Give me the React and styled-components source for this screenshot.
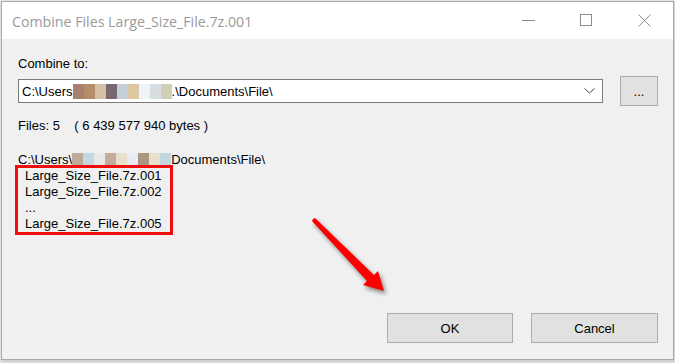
import React from "react";
import styled, {createGlobalStyle} from "styled-components";

const GlobalStyle = createGlobalStyle`
  html, body {
    margin: 0;
    padding: 0;
    background: #e6e6e6;
  }
  body {
    width: 675px;
    height: 363px;
    overflow: hidden;
  }
`;

const Window = styled.div`
  position: relative;
  margin: 1px 0 0 1px;
  width: 673px;
  height: 359px;
  box-sizing: border-box;
  border: 1px solid #a9a9a9;
  background: #f0f0f0;
  display: flex;
  flex-direction: column;
  box-shadow: 1px 2px 3px rgba(0, 0, 0, 0.12);
  font-family: "Liberation Sans", Arial, sans-serif;
  font-size: 13px;
  color: #000;
`;

const TitleBar = styled.div`
  height: 37px;
  background: #fff;
  display: flex;
  align-items: center;
`;

const Title = styled.div`
  flex: 1;
  padding-left: 10px;
  padding-top: 1px;
  font-family: "Open Sans", "Noto Sans", sans-serif;
  font-size: 14.2px;
  color: #9a9a9a;
  white-space: nowrap;
`;

const TitleButton = styled.div`
  width: 58px;
  height: 37px;
  display: flex;
  align-items: center;
  justify-content: center;

  svg {
    display: block;
  }
`;

const Body = styled.div`
  flex: 1;
  display: flex;
  flex-direction: column;
  padding: 17px 15px 16px 16px;
`;

const Label = styled.div`
  line-height: 15px;
  margin-bottom: 5px;
`;

const PathRow = styled.div`
  display: flex;
  align-items: center;
  gap: 17px;
`;

const Combo = styled.div`
  width: 585px;
  height: 24px;
  box-sizing: border-box;
  border: 1px solid #7a7a7a;
  background: #fff;
  display: flex;
  align-items: center;
  padding: 0 7px 0 3px;
  white-space: nowrap;
`;

const ComboText = styled.div`
  flex: 1;
  display: flex;
  align-items: center;
`;

const Blur = styled.span`
  display: inline-block;
  width: ${(p) => p.$w || 11}px;
  height: ${(p) => p.$h || 15}px;
  background: ${(p) => p.$c};
`;

const Button = styled.div`
  width: ${(p) => p.$w}px;
  height: 30px;
  box-sizing: border-box;
  border: 1px solid #adadad;
  background: #e1e1e1;
  display: flex;
  align-items: center;
  justify-content: center;
`;

const Info = styled.div`
  margin-top: 12px;
  line-height: 15px;
  white-space: pre;
`;

const Folder = styled.div`
  margin-top: 19px;
  line-height: 15px;
  display: flex;
  align-items: center;
  white-space: nowrap;
`;

const Highlight = styled.div`
  margin: -2px 0 0 -3px;
  width: 158px;
  box-sizing: border-box;
  border: 3px solid #f00d0d;
  padding: 0 0 0 7px;
`;

const FileLine = styled.div`
  line-height: 16px;
  height: 16px;
`;

const Footer = styled.div`
  margin-top: auto;
  display: flex;
  justify-content: flex-end;
  gap: 18px;
`;

const Arrow = styled.svg`
  position: absolute;
  left: 299px;
  top: 205px;
  overflow: visible;
  filter: drop-shadow(2px 3px 2px rgba(0, 0, 0, 0.45));
`;

const comboBlur = ["#a97f6f", "#b68d6a", "#d6c0a5", "#76696f", "#c3d0d8", "#dec8a3", "#eef4fa", "#d8dde0", "#d0d0b8"];
const folderBlur = ["#c0aa9a", "#c4d9e0", "#e8ebea", "#c4ac9a", "#e6e0cc", "#e6ecef", "#ab9680", "#e6e0cc", "#c4d6e2"];

const files = ["Large_Size_File.7z.001", "Large_Size_File.7z.002", "...", "Large_Size_File.7z.005"];

const App = () => {
  return (
    <>
      <GlobalStyle />
      <Window>
        <TitleBar>
          <Title>Combine Files Large_Size_File.7z.001</Title>
          <TitleButton>
            <svg width="13" height="13" viewBox="0 0 13 13">
              <line x1="0" y1="6.5" x2="13" y2="6.5" stroke="#8c8c8c" strokeWidth="1" />
            </svg>
          </TitleButton>
          <TitleButton>
            <svg width="13" height="13" viewBox="0 0 13 13">
              <rect x="0.5" y="0.5" width="11" height="11" fill="none" stroke="#8c8c8c" strokeWidth="1" />
            </svg>
          </TitleButton>
          <TitleButton>
            <svg width="13" height="13" viewBox="0 0 13 13">
              <path d="M0.5 0.5 L12.5 12.5 M12.5 0.5 L0.5 12.5" stroke="#8c8c8c" strokeWidth="1" />
            </svg>
          </TitleButton>
        </TitleBar>
        <Body>
          <Label>Combine to:</Label>
          <PathRow>
            <Combo>
              <ComboText>
                C:\Users
                {comboBlur.map((c, i) => (
                  <Blur key={i} $c={c} />
                ))}
                .\Documents\File\
              </ComboText>
              <svg width="11" height="6" viewBox="0 0 11 6">
                <path d="M0.5 0.5 L5.5 5 L10.5 0.5" fill="none" stroke="#444" strokeWidth="1" />
              </svg>
            </Combo>
            <Button $w={38}>...</Button>
          </PathRow>
          <Info>{"Files: 5    ( 6 439 577 940 bytes )"}</Info>
          <Folder>
            C:\Users\
            {folderBlur.map((c, i) => (
              <Blur key={i} $c={c} $h={14} />
            ))}
            Documents\File\
          </Folder>
          <Highlight>
            {files.map((f) => (
              <FileLine key={f}>{f}</FileLine>
            ))}
          </Highlight>
          <Footer>
            <Button $w={126}>OK</Button>
            <Button $w={127}>Cancel</Button>
          </Footer>
        </Body>
        <Arrow width="90" height="90" viewBox="0 0 90 90">
          <path d="M12 12 L14 11 L73 68 L77 64 L83 84 L62 78 L66 74 L11 14 Z" fill="#ff0000" />
        </Arrow>
      </Window>
    </>
  );
};

export default App;
